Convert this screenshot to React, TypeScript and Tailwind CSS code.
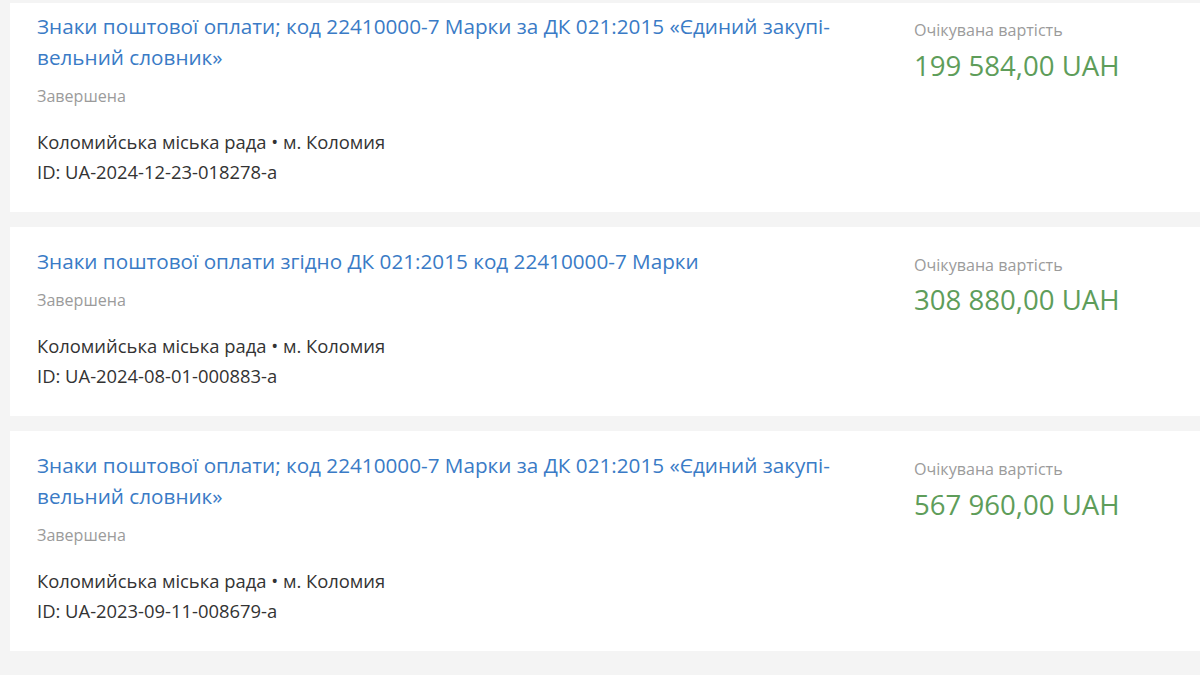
interface TenderProps {
  title: string;
  status: string;
  buyer: string;
  tenderId: string;
  amount: string;
  first?: boolean;
}

function Tender({ title, status, buyer, tenderId, amount, first }: TenderProps) {
  return (
    <div className={`flex w-[1230px] bg-white pl-[27px] pt-[19.3px] pb-[25px] ${first ? "-mt-[11px]" : ""}`}>
      <div className="w-[877px] shrink-0">
        <a href="#" className="block w-[850px] text-[20.7px] leading-[30.5px] text-[#3a7bc6] hyphens-manual">
          {title}
        </a>
        <div className="mt-[12.5px] text-[16.1px] leading-[22px] text-[#9b9b9b]">{status}</div>
        <div className="mt-[20px] text-[18.4px] leading-[30px] text-[#333333]">
          <div>{buyer}</div>
          <div>ID: {tenderId}</div>
        </div>
      </div>
      <div className="pt-[7.7px]">
        <div className="text-[16.1px] leading-[22px] text-[#9b9b9b]">Очікувана вартість</div>
        <div className="mt-[4.6px] text-[27.6px] leading-[38px] text-[#5e9d5a]">{amount}</div>
      </div>
    </div>
  );
}

const longTitle = "Знаки поштової оплати; код 22410000-7 Марки за ДК 021:2015 «Єдиний закупі\u00ADвельний словник»";

export default function App() {
  return (
    <div
      className="h-[675px] w-[1200px] overflow-hidden bg-[#f4f4f4] pt-[3px] pl-[10px]"
      style={{ fontFamily: '"Open Sans", "Noto Sans", sans-serif' }}
    >
      <div className="flex flex-col gap-[15px]">
        <div className="overflow-hidden">
          <Tender
            first
            title={longTitle}
            status="Завершена"
            buyer="Коломийська міська рада • м. Коломия"
            tenderId="UA-2024-12-23-018278-a"
            amount="199 584,00 UAH"
          />
        </div>
        <Tender
          title="Знаки поштової оплати згідно ДК 021:2015 код 22410000-7 Марки"
          status="Завершена"
          buyer="Коломийська міська рада • м. Коломия"
          tenderId="UA-2024-08-01-000883-a"
          amount="308 880,00 UAH"
        />
        <Tender
          title={longTitle}
          status="Завершена"
          buyer="Коломийська міська рада • м. Коломия"
          tenderId="UA-2023-09-11-008679-a"
          amount="567 960,00 UAH"
        />
      </div>
    </div>
  );
}
